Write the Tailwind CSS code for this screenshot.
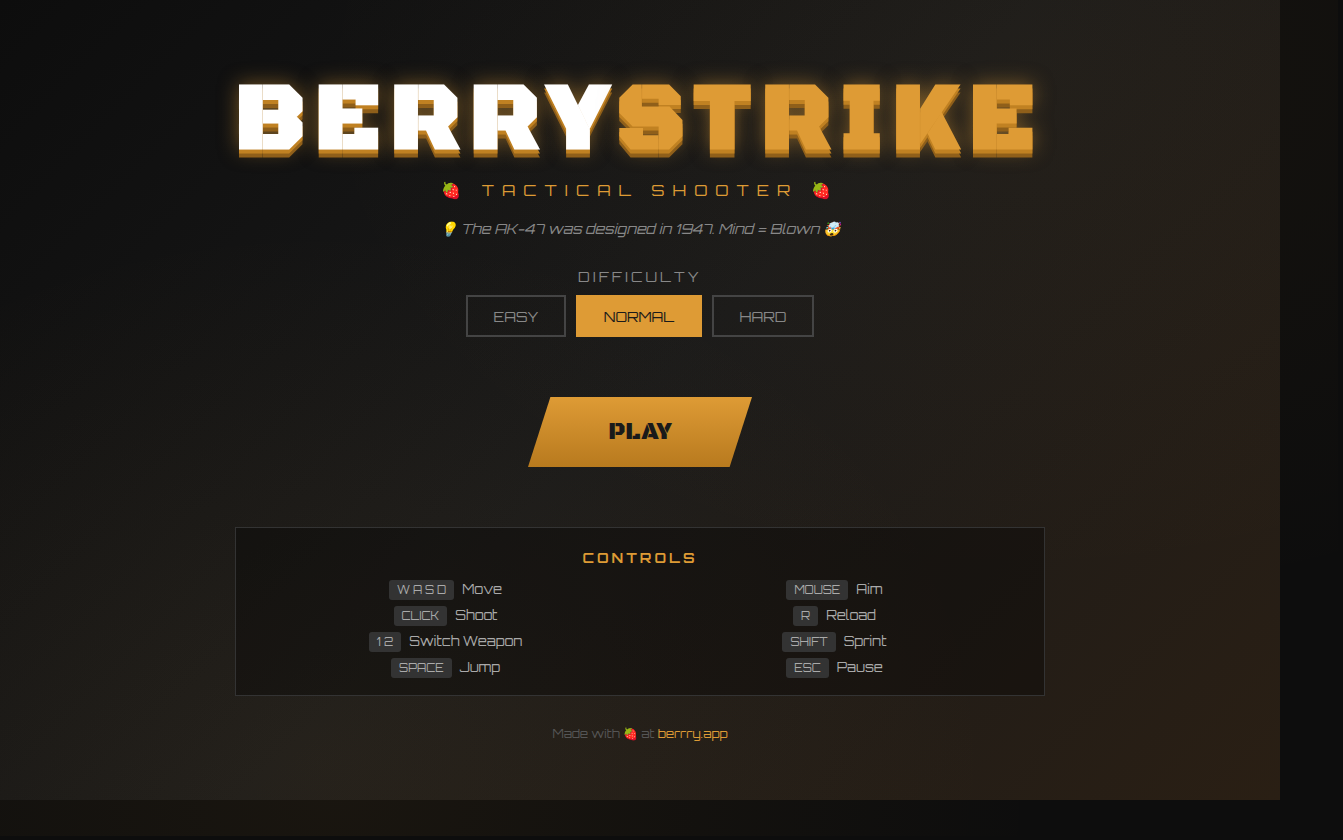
<!DOCTYPE html>
<html lang="en">
<head>
  <meta charset="UTF-8">
  <meta name="viewport" content="width=device-width, initial-scale=1.0">
  <title>BerryStrike - Tactical Shooter</title>
  <script src="https://cdn.jsdelivr.net/npm/@tailwindcss/browser@4"></script>
</head>
<body class="relative min-h-screen bg-[#0d0d0d] pr-[63px] pb-10 font-['Orbitron','DejaVu_Sans',sans-serif]">
  <!-- amber glow, shows on the page edge outside the menu too -->
  <div class="pointer-events-none absolute top-0 left-0 right-[5px] bottom-1 bg-[radial-gradient(ellipse_at_25%_95%,rgba(222,155,53,0.06)_0%,transparent_50%),radial-gradient(ellipse_at_80%_10%,rgba(222,155,53,0.04)_0%,transparent_50%)]"></div>

  <main class="relative flex min-h-[calc(100vh-40px)] flex-col items-center bg-[radial-gradient(ellipse_at_25%_95%,rgba(222,155,53,0.06)_0%,transparent_50%),radial-gradient(ellipse_at_80%_10%,rgba(222,155,53,0.04)_0%,transparent_50%),linear-gradient(135deg,#0d0d0d_0%,#1a1a1a_50%,#2a1f14_100%)] pt-[70px] text-center">
    <h1 class="font-['Black_Ops_One','DejaVu_Sans',sans-serif] text-[96px] leading-[100px] font-black tracking-widest whitespace-nowrap text-white [text-shadow:0_4px_0_#c08122,0_8px_0_#8f5f1a,0_0_20px_rgba(222,155,53,0.5)]">BERRY<span class="text-[#de9b35]">STRIKE</span></h1>
    <p class="mt-2 text-[16px] leading-6 tracking-[8px] text-[#de9b35]">🍓 TACTICAL SHOOTER 🍓</p>
    <p class="mt-[17px] text-[14px] leading-5 text-[#888] italic">💡 The AK-47 was designed in 1947. Mind = Blown 🤯</p>

    <h2 id="difficulty" class="mt-7 text-[14px] leading-5 tracking-[3px] text-[#888]">DIFFICULTY</h2>
    <div role="group" aria-labelledby="difficulty" class="mt-2 flex gap-[10px] text-[14px]">
      <button type="button" class="h-[42px] w-[100px] border-2 border-[#444] text-[#888]">EASY</button>
      <button type="button" aria-pressed="true" class="h-[42px] w-[126px] border-2 border-[#de9b35] bg-[#de9b35] text-[#1a1a1a]">NORMAL</button>
      <button type="button" class="h-[42px] w-[102px] border-2 border-[#444] text-[#888]">HARD</button>
    </div>

    <button type="button" class="mt-15 h-[70px] w-56 bg-linear-to-b from-[#de9b35] to-[#b87a1e] font-['Black_Ops_One','DejaVu_Sans',sans-serif] text-[24px] text-[#1a1a1a] [clip-path:polygon(10%_0,100%_0,90%_100%,0_100%)]">PLAY</button>

    <section class="mt-15 w-full max-w-[810px] border border-[#333] bg-black/30 px-5 pt-5 pb-[17px]">
      <h3 class="text-[14px] leading-5 font-bold tracking-[3px] text-[#de9b35]">CONTROLS</h3>
      <div class="mt-3 grid grid-cols-2 gap-x-[10px] gap-y-[6px] text-[13px] leading-[18px] text-[#aaa]">
        <div class="flex justify-center gap-2"><kbd class="rounded-[3px] bg-[#333] px-2 font-[inherit] text-[11px] leading-5">W A S D</kbd>Move</div>
        <div class="flex justify-center gap-2"><kbd class="rounded-[3px] bg-[#333] px-2 font-[inherit] text-[11px] leading-5">MOUSE</kbd>Aim</div>
        <div class="flex justify-center gap-2"><kbd class="rounded-[3px] bg-[#333] px-2 font-[inherit] text-[11px] leading-5">CLICK</kbd>Shoot</div>
        <div class="flex justify-center gap-2"><kbd class="rounded-[3px] bg-[#333] px-2 font-[inherit] text-[11px] leading-5">R</kbd>Reload</div>
        <div class="flex justify-center gap-2"><kbd class="rounded-[3px] bg-[#333] px-2 font-[inherit] text-[11px] leading-5">1 2</kbd>Switch Weapon</div>
        <div class="flex justify-center gap-2"><kbd class="rounded-[3px] bg-[#333] px-2 font-[inherit] text-[11px] leading-5">SHIFT</kbd>Sprint</div>
        <div class="flex justify-center gap-2"><kbd class="rounded-[3px] bg-[#333] px-2 font-[inherit] text-[11px] leading-5">SPACE</kbd>Jump</div>
        <div class="flex justify-center gap-2"><kbd class="rounded-[3px] bg-[#333] px-2 font-[inherit] text-[11px] leading-5">ESC</kbd>Pause</div>
      </div>
    </section>

    <footer class="mt-7 text-[12px] leading-5 text-[#555]">Made with 🍓 at <a href="#" class="text-[#de9b35]">berrry.app</a></footer>
  </main>
</body>
</html>
